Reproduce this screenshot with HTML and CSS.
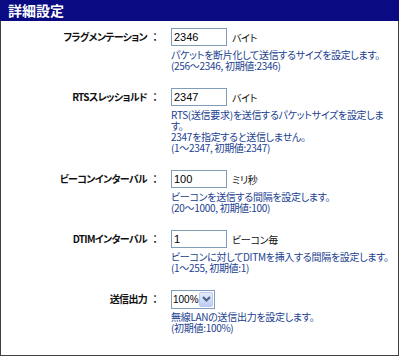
FILE: index.html
```html
<!DOCTYPE html>
<html lang="ja">
<head>
    <title>詳細設定</title>
    <meta charset="UTF-8">
    <meta name="viewport" content="width=device-width, initial-scale=1.0">
    <link rel="stylesheet" href="styles.css">
</head>
<body>
    <div class="panel">
        <h1 class="panel-title">詳細設定</h1>

        <div class="row">
            <div class="label">フラグメンテーション<span class="colon">：</span></div>
            <div class="field">
                <div class="control">
                    <input class="text-input" type="text" value="2346">
                    <span class="unit">バイト</span>
                </div>
                <p class="note">パケットを断片化して送信するサイズを設定します。<br>(256～2346, 初期値:2346)</p>
            </div>
        </div>

        <div class="row">
            <div class="label">RTSスレッショルド<span class="colon">：</span></div>
            <div class="field">
                <div class="control">
                    <input class="text-input" type="text" value="2347">
                    <span class="unit">バイト</span>
                </div>
                <p class="note">RTS(送信要求)を送信するパケットサイズを設定します。<br>2347を指定すると送信しません。<br>(1～2347, 初期値:2347)</p>
            </div>
        </div>

        <div class="row">
            <div class="label">ビーコンインターバル<span class="colon">：</span></div>
            <div class="field">
                <div class="control">
                    <input class="text-input" type="text" value="100">
                    <span class="unit">ミリ秒</span>
                </div>
                <p class="note">ビーコンを送信する間隔を設定します。<br>(20～1000, 初期値:100)</p>
            </div>
        </div>

        <div class="row">
            <div class="label">DTIMインターバル<span class="colon">：</span></div>
            <div class="field">
                <div class="control">
                    <input class="text-input" type="text" value="1">
                    <span class="unit">ビーコン毎</span>
                </div>
                <p class="note">ビーコンに対してDITMを挿入する間隔を設定します。<br>(1～255, 初期値:1)</p>
            </div>
        </div>

        <div class="row">
            <div class="label">送信出力<span class="colon">：</span></div>
            <div class="field">
                <div class="control">
                    <span class="select-box">
                        <select class="select">
                            <option>100%</option>
                            <option>50%</option>
                            <option>25%</option>
                        </select>
                        <span class="select-button">
                            <svg width="9" height="6" viewBox="0 0 9 6"><path d="M1 1 L4.5 4.5 L8 1" fill="none" stroke="#4d6185" stroke-width="2"/></svg>
                        </span>
                    </span>
                </div>
                <p class="note">無線LANの送信出力を設定します。<br>(初期値:100%)</p>
            </div>
        </div>
    </div>
</body>
</html>
```

FILE: styles.css
```css
/* Reset */
* {
    box-sizing: border-box;
    margin: 0;
    padding: 0;
}

body {
    background: #ffffff;
    font-family: 'Noto Sans CJK JP', 'Liberation Sans', sans-serif;
    color: #000;
}

/* Panel */
.panel {
    width: 399px;
    height: 356px;
    border: 1px solid #404040;
    border-top: none;
}

.panel-title {
    height: 21px;
    margin: 0 -1px;
    padding-left: 8px;
    background-color: #0a0a82;
    color: #ffffff;
    font-size: 14px;
    font-weight: bold;
    line-height: 21px;
}

/* Rows */
.row {
    display: grid;
    grid-template-columns: 162px 220px;
    column-gap: 8px;
    padding-top: 7px;
    padding-bottom: 10px;
}

.label {
    height: 18px;
    line-height: 18px;
    text-align: right;
    font-size: 10px;
    font-weight: bold;
    letter-spacing: -0.7px;
    color: #111;
    font-feature-settings: "palt";
}

.colon {
    display: inline-block;
    width: 16px;
    text-align: center;
    font-feature-settings: normal;
    letter-spacing: 0;
}

.control {
    display: flex;
    align-items: center;
    gap: 5px;
    height: 18px;
}

.text-input {
    width: 56px;
    height: 18px;
    border: 1px solid #7f9db9;
    padding: 0 2px;
    font-family: 'Liberation Sans', sans-serif;
    font-size: 11px;
    color: #000;
}

.unit {
    font-size: 10px;
    letter-spacing: -0.3px;
    color: #111;
    font-feature-settings: "palt";
}

/* Select */
.select-box {
    display: inline-flex;
    align-items: center;
    width: 44px;
    height: 19px;
    padding-right: 1px;
    border: 1px solid #7f9db9;
    background: #fff;
}

.select {
    appearance: none;
    -webkit-appearance: none;
    flex: 1;
    min-width: 0;
    border: none;
    background: transparent;
    padding-left: 1px;
    font-family: 'Liberation Sans', sans-serif;
    font-size: 10px;
    color: #000;
}

.select-button {
    display: flex;
    align-items: center;
    justify-content: center;
    width: 14px;
    height: 15px;
    border: 1px solid #b9c9ef;
    border-radius: 2px;
    background: linear-gradient(#e4ecfd, #bccdf4);
}

/* Notes */
.note {
    margin-top: 3px;
    font-size: 10px;
    line-height: 11px;
    letter-spacing: -0.3px;
    color: #21418f;
    font-feature-settings: "palt";
}
```
